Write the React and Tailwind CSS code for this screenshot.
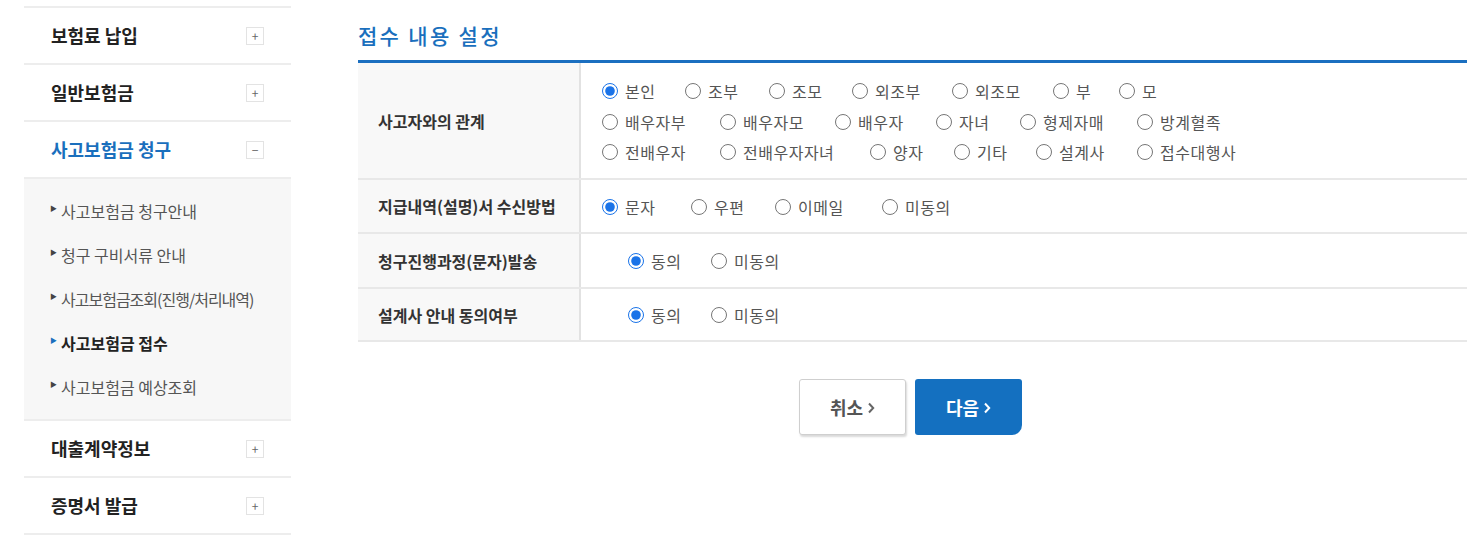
import React from 'react';

const font = { fontFamily: '"Noto Sans CJK KR", "Noto Sans", sans-serif' };

const menus = [
  { label: '보험료 납입' },
  { label: '일반보험금' },
  { label: '사고보험금 청구', open: true },
  { label: '대출계약정보' },
  { label: '증명서 발급' },
];

const subMenus = [
  { label: '사고보험금 청구안내' },
  { label: '청구 구비서류 안내' },
  { label: '사고보험금조회(진행/처리내역)', tight: true },
  { label: '사고보험금 접수', active: true },
  { label: '사고보험금 예상조회' },
];

// [label, slot width]
const relationRows = [
  [['본인', 'w-[83px]'], ['조부', 'w-[84px]'], ['조모', 'w-[83px]'], ['외조부', 'w-[100px]'], ['외조모', 'w-[101px]'], ['부', 'w-[66px]'], ['모', '']],
  [['배우자부', 'w-[118px]'], ['배우자모', 'w-[115px]'], ['배우자', 'w-[101px]'], ['자녀', 'w-[84px]'], ['형제자매', 'w-[117px]'], ['방계혈족', '']],
  [['전배우자', 'w-[118px]'], ['전배우자자녀', 'w-[150px]'], ['양자', 'w-[84px]'], ['기타', 'w-[82px]'], ['설계사', 'w-[101px]'], ['접수대행사', '']],
];

const Radio = ({ name, label, checked, slot = '' }) => (
  <label className={`inline-flex items-center shrink-0 text-[16px] tracking-[0.5px] text-[#555] whitespace-nowrap ${slot}`}>
    <input
      type="radio"
      name={name}
      defaultChecked={checked}
      className="m-0 mr-[7px] w-[16px] h-[16px] accent-[#1a73e8]"
    />
    {label}
  </label>
);

const ToggleBox = ({ open }) => (
  <span className="w-[18px] h-[18px] border border-[#e3e3e3] flex items-center justify-center text-[12px] leading-none text-[#666]">
    {open ? '−' : '+'}
  </span>
);

const Chevron = ({ color }) => (
  <svg width="8" height="12" viewBox="0 0 8 12" className="ml-[4px] mt-[1px]">
    <path d="M2 1.5 L6.2 6 L2 10.5" fill="none" stroke={color} strokeWidth="2" />
  </svg>
);

const Sidebar = () => (
  <div className="w-[267px] ml-[24px] mt-[6px] border-t-2 border-[#ededed]">
    {menus.map((m) => (
      <div key={m.label}>
        <div className="h-[57px] flex items-center justify-between pl-[27px] pr-[27px] border-b-2 border-[#ededed]">
          <span className={`text-[18px] font-bold ${m.open ? 'text-[#1a6fbd]' : 'text-[#222]'}`}>{m.label}</span>
          <ToggleBox open={m.open} />
        </div>
        {m.open && (
          <div className="bg-[#f7f7f7] pt-[10px] pb-[10px] border-b-2 border-[#ededed]">
            {subMenus.map((s) => (
              <div key={s.label} className="h-[44px] flex items-center pl-[26px]">
                <span className={`text-[7px] mr-[4px] -mt-[6px] ${s.active ? 'text-[#1a6fbd]' : 'text-[#444]'}`}>▶</span>
                <span
                  className={`text-[16px] ${s.active ? 'font-bold text-[#222]' : 'text-[#555]'} ${s.tight ? 'tracking-[-1px]' : ''}`}
                >
                  {s.label}
                </span>
              </div>
            ))}
          </div>
        )}
      </div>
    ))}
  </div>
);

const Row = ({ label, children, className = '' }) => (
  <div className={`flex border-b-2 border-[#e8e8e8] ${className}`}>
    <div className="w-[223px] shrink-0 bg-[#f8f8f8] border-r-2 border-[#e2e2e2] flex items-center pl-[20px] text-[16px] font-bold text-[#333]">
      {label}
    </div>
    <div className="flex-1 pl-[21px]">{children}</div>
  </div>
);

export default function App() {
  return (
    <div className="w-[1483px] h-[538px] bg-white flex overflow-hidden" style={font}>
      <Sidebar />
      <div className="ml-[67px] w-[1109px]">
        <h2 className="text-[21px] font-medium text-[#1a6fbd] h-[60px] flex items-center pt-[12px] tracking-[2.3px]">
          접수 내용 설정
        </h2>
        <div className="border-t-[3px] border-[#1b6fc0]">
          <Row label="사고자와의 관계" className="h-[117px]">
            <div className="h-full flex flex-col justify-center pt-[2px]">
              {relationRows.map((row, i) => (
                <div key={i} className="h-[30.5px] flex items-center">
                  {row.map(([r, slot], j) => (
                    <Radio key={r} name="relation" label={r} slot={slot} checked={i === 0 && j === 0} />
                  ))}
                </div>
              ))}
            </div>
          </Row>
          <Row label="지급내역(설명)서 수신방법" className="h-[54px]">
            <div className="h-full flex items-center pt-[2px]">
              <Radio name="receive" label="문자" slot="w-[89px]" checked />
              <Radio name="receive" label="우편" slot="w-[84px]" />
              <Radio name="receive" label="이메일" slot="w-[107px]" />
              <Radio name="receive" label="미동의" />
            </div>
          </Row>
          <Row label="청구진행과정(문자)발송" className="h-[55px]">
            <div className="h-full flex items-center pl-[26px] pt-[1px]">
              <Radio name="progress" label="동의" slot="w-[83px]" checked />
              <Radio name="progress" label="미동의" />
            </div>
          </Row>
          <Row label="설계사 안내 동의여부" className="h-[53px] border-[#c4c4c4]">
            <div className="h-full flex items-center pl-[26px] pt-[1px]">
              <Radio name="planner" label="동의" slot="w-[83px]" checked />
              <Radio name="planner" label="미동의" />
            </div>
          </Row>
        </div>
        <div className="flex justify-center gap-[9px] mt-[37px] pr-[4px]">
          <button className="w-[107px] h-[56px] bg-white border border-[#cfcfcf] rounded-[3px] shadow-[1px_2px_2px_rgba(0,0,0,0.15)] text-[18px] font-bold text-[#555] flex items-center justify-center">
            취소<Chevron color="#666" />
          </button>
          <button className="w-[107px] h-[56px] bg-[#1470c0] rounded-[3px] rounded-br-[10px] text-[18px] font-bold text-white flex items-center justify-center">
            다음<Chevron color="#fff" />
          </button>
        </div>
      </div>
    </div>
  );
}
